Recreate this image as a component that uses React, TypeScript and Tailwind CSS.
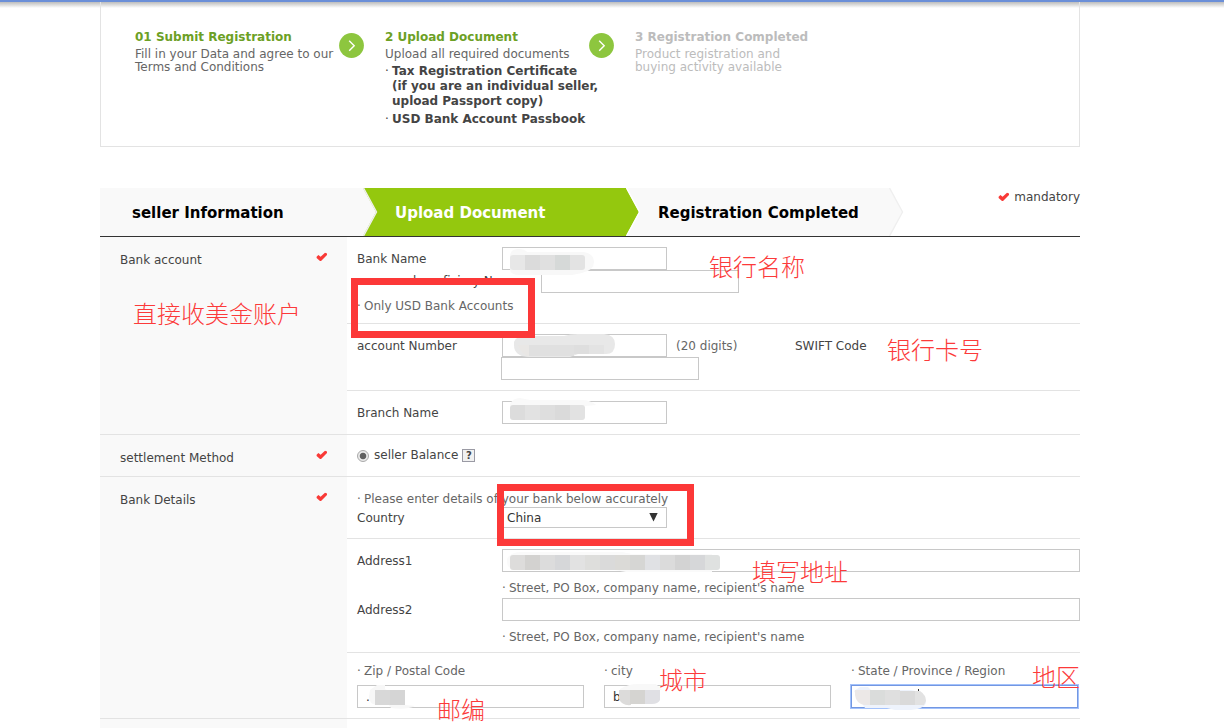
import { useState } from 'react';
import type { ReactNode } from 'react';

const INPUT = 'block h-[23px] w-full border bg-white px-2 text-xs text-[#333] outline-none';

function Check() {
  return (
    <svg width="12" height="10" viewBox="0 0 12 10" className="shrink-0" aria-hidden="true">
      <path d="M0.6 4.8 L2.4 2.9 L4.6 4.8 L9 0.8 L11 1.6 L11 3 L5 9 L4 9 L0.6 6 Z" fill="#f93a37" />
    </svg>
  );
}

function StepArrow() {
  return (
    <svg width="25" height="25" viewBox="0 0 25 25" className="mt-1 shrink-0" aria-hidden="true">
      <circle cx="12.5" cy="12.5" r="12.4" fill="#8dc63f" />
      <path d="M10.2 7.8 L15.2 12.8 L10.2 17.8" fill="none" stroke="#fff" strokeWidth="1.4" />
    </svg>
  );
}

interface StepProps {
  title: string;
  lines: string[];
  muted?: boolean;
  last?: boolean;
  children?: ReactNode;
}

function Step({ title, lines, muted, last, children }: StepProps) {
  return (
    <li className="w-[250px] whitespace-nowrap">
      <div className="flex">
        <div className="w-[204px]">
          <h3 className={`leading-4 font-bold ${muted ? 'text-[#bcbcbc]' : 'text-[#6ca025]'}`}>{title}</h3>
          <p className={`mt-[3px] leading-[13px] ${muted ? 'text-[#bcbcbc]' : 'text-[#666]'}`}>
            {lines[0]}
            {lines[1] && <br />}
            {lines[1]}
          </p>
        </div>
        {!last && <StepArrow />}
      </div>
      {children}
    </li>
  );
}

function Bullet({ children }: { children: ReactNode }) {
  return (
    <span className="flex text-[#666]">
      <span className="w-[7px] shrink-0">·</span>
      <span>{children}</span>
    </span>
  );
}

interface TabProps {
  label: string;
  active?: boolean;
}

function Tab({ label, active }: TabProps) {
  return (
    <li className={`relative w-[263px] ${active ? 'bg-[#94c80e]' : 'bg-[#f9f9f9]'}`}>
      <a
        href="#"
        className={`block pt-[13px] pb-[11px] pl-8 text-[15px] leading-6 font-bold whitespace-nowrap ${active ? 'text-white' : 'text-black'}`}
      >
        {label}
      </a>
      <svg width="15" height="48" viewBox="0 0 15 48" className="absolute top-0 left-full z-10" aria-hidden="true">
        <path d="M0 0 L13 24 L0 48 Z" fill={active ? '#94c80e' : '#f9f9f9'} />
        <path d="M0.5 0 L13.5 24 L0.5 48" fill="none" stroke={active ? '#ffffff' : '#efefef'} strokeWidth="1.4" />
      </svg>
    </li>
  );
}

interface FieldProps {
  id: string;
  label?: string;
  value?: string;
  className?: string;
  focused?: boolean;
  children?: ReactNode;
}

// children are drawn over the box, in the box's own coordinates
function Field({ id, label, value = '', className = '', focused, children }: FieldProps) {
  const [text, setText] = useState(value);
  return (
    <div className={`relative ${className}`}>
      <input
        id={id}
        type="text"
        aria-label={label}
        value={text}
        onChange={(e) => setText(e.target.value)}
        className={`${INPUT} ${focused ? 'border-[#7397e2] ring-1 ring-[#a3c2fb]' : 'border-[#c8c8c8]'}`}
      />
      {children && (
        <svg width="1" height="1" className="pointer-events-none absolute top-0 left-0 overflow-visible" aria-hidden="true">
          {children}
        </svg>
      )}
    </div>
  );
}

interface CellsProps {
  id: string;
  x: number;
  y: number;
  height: number;
  colors: string[];
  size?: number;
}

function Cells({ id, x, y, height, colors, size = 15 }: CellsProps) {
  return (
    <g>
      <clipPath id={id}>
        <rect x={x} y={y} width={size * colors.length} height={height} rx="3" />
      </clipPath>
      <g clipPath={`url(#${id})`}>
        {colors.map((color, i) => (
          <rect key={i} x={x + i * size} y={y} width={size} height={height} fill={color} />
        ))}
      </g>
    </g>
  );
}

function SideLabel({ children }: { children: ReactNode }) {
  return (
    <div className="flex w-[247px] shrink-0 items-start justify-between bg-[#f9f9f9] pt-[15px] pr-[19px] pl-5">
      <span className="leading-4">{children}</span>
      <Check />
    </div>
  );
}

function Label({ htmlFor, children }: { htmlFor: string; children: ReactNode }) {
  return (
    <label htmlFor={htmlFor} className="w-[145px] shrink-0 leading-6">
      {children}
    </label>
  );
}

function Note({ className, children }: { className: string; children: ReactNode }) {
  return (
    <span
      className={`pointer-events-none absolute font-['Noto_Sans_CJK_SC',sans-serif] text-2xl leading-8 font-light whitespace-nowrap text-[#fc3a3a] ${className}`}
    >
      {children}
    </span>
  );
}

export default function App() {
  const [country, setCountry] = useState('China');

  return (
    <div className="flex min-h-screen flex-col bg-white font-['DejaVu_Sans',Verdana,sans-serif] text-xs text-[#444]">
      <div className="h-0.5 bg-[#6b8fd8]" />
      <div className="h-1.5 bg-linear-to-b from-[#bdbdbd] to-white" />

      <div className="relative -mt-1.5 flex grow flex-col pr-36 pl-[100px]">
        <section className="border border-t-0 border-[#e3e3e3] pt-[27px] pb-[19px] pl-[34px]">
          <ol className="flex">
            <Step title="01 Submit Registration" lines={['Fill in your Data and agree to our', 'Terms and Conditions']} />
            <Step title="2 Upload Document" lines={['Upload all required documents']}>
              <ul className="mt-[3px] leading-[15px] font-bold">
                <li className="flex">
                  <span className="w-[7px] shrink-0 font-normal">·</span>
                  <span>
                    Tax Registration Certificate
                    <br />
                    (if you are an individual seller,
                    <br />
                    upload Passport copy)
                  </span>
                </li>
                <li className="mt-[3px] flex">
                  <span className="w-[7px] shrink-0 font-normal">·</span>
                  <span>USD Bank Account Passbook</span>
                </li>
              </ul>
            </Step>
            <Step
              title="3 Registration Completed"
              lines={['Product registration and', 'buying activity available']}
              muted
              last
            />
          </ol>
        </section>

        <nav className="mt-[41px] flex justify-between border-b border-[#333]">
          <ol className="flex">
            <Tab label="seller Information" />
            <Tab label="Upload Document" active />
            <Tab label="Registration Completed" />
          </ol>
          <p className="flex items-center gap-1 self-start leading-[18px]">
            <Check />
            mandatory
          </p>
        </nav>

        <form className="flex grow flex-col">
          <div className="flex border-b border-[#e3e3e3]">
            <SideLabel>Bank account</SideLabel>
            <div className="min-w-0 grow">
              <div className="border-b border-[#e3e3e3] pt-2.5 pb-1 pl-2.5">
                <div className="flex h-[23px]">
                  <Label htmlFor="bank-name">Bank Name</Label>
                  <Field id="bank-name" className="z-10 w-[165px]">
                    <path d="M8 8 Q9 2 16 2 Q23 2 25 5 H82 Q92 7 92 15 Q92 23 80 26 L70 28 H18 Q8 28 8 22 Z" fill="#f8f8f8" />
                    <Cells id="c-bank" x={8} y={8} height={15} colors={['#e7e7e7', '#dbdbdb', '#e0e0e0', '#d6d9d8', '#e3e3e3']} />
                  </Field>
                </div>
                <div className="flex h-[23px]">
                  <label htmlFor="beneficiary" className="w-[184px] shrink-0 pl-14 leading-[23px]">
                    beneficiary Name
                  </label>
                  <Field id="beneficiary" className="w-[198px]" />
                </div>
                <p className="leading-[26px]">
                  <Bullet>Only USD Bank Accounts</Bullet>
                </p>
              </div>

              <div className="border-b border-[#e3e3e3] py-2.5 pl-2.5">
                <div className="flex h-[23px] leading-6">
                  <Label htmlFor="account-number">account Number</Label>
                  <Field id="account-number" className="w-[165px]">
                    <path
                      d="M12 8 Q14 2 22 2 H62 Q68 0 76 0 H102 Q113 1 113 10 Q113 20 104 20 H76 L68 23 H26 Q12 22 12 11 Z"
                      fill="#e8e8e8"
                    />
                    <path d="M16 11 H27 V23 Q19 20 16 11 Z" fill="#e9e7e5" />
                    <rect x="27" y="11" width="45" height="11" fill="#e0e0e0" />
                    <rect x="72" y="11" width="15" height="9" fill="#dedede" />
                    <rect x="87" y="11" width="15" height="9" fill="#e3e3e3" />
                  </Field>
                  <span className="w-[128px] pl-[9px] text-[#666]">(20 digits)</span>
                  <label htmlFor="swift-code">SWIFT Code</label>
                </div>
                <Field id="swift-code" className="ml-36 w-[198px]" />
              </div>

              <div className="flex h-[43px] py-2.5 pl-2.5">
                <Label htmlFor="branch-name">Branch Name</Label>
                <Field id="branch-name" className="w-[165px]">
                  <path d="M8 3 Q11 -3 18 -3 L28 -1 H80 Q88 -1 94 4 L84 5 H8 Z" fill="#f9f9f9" />
                  <Cells id="c-branch" x={8} y={4} height={15} colors={['#dcdcdc', '#e2e2e2', '#dedede', '#dadada', '#e2e2e2']} />
                </Field>
              </div>
            </div>
          </div>

          <div className="flex border-b border-[#e3e3e3]">
            <SideLabel>settlement Method</SideLabel>
            <div className="flex items-center py-3 pl-2.5 leading-[17px]">
              <input
                id="seller-balance"
                type="radio"
                name="settlement"
                defaultChecked
                className="size-3 appearance-none rounded-full border border-[#a9a9a9] bg-radial from-[#606060] from-40% to-[#e9e9e9] to-52%"
              />
              <label htmlFor="seller-balance" className="ml-[5px]">
                seller Balance
              </label>
              <button
                type="button"
                aria-label="Help"
                className="ml-1 flex size-[13px] items-center justify-center border border-[#9a9aa4] bg-[#f1f1f1] text-[10px] leading-none font-bold"
              >
                ?
              </button>
            </div>
          </div>

          <div className="flex border-b border-[#e3e3e3]">
            <SideLabel>Bank Details</SideLabel>
            <div className="min-w-0 grow">
              <div className="border-b border-[#e3e3e3] pt-[15px] pb-2.5 pl-2.5">
                <p className="leading-[15px]">
                  <Bullet>Please enter details of your bank below accurately</Bullet>
                </p>
                <div className="flex h-[21px]">
                  <label htmlFor="country" className="w-[145px] shrink-0 leading-[22px]">
                    Country
                  </label>
                  <div className="relative w-[165px]">
                    <select
                      id="country"
                      value={country}
                      onChange={(e) => setCountry(e.target.value)}
                      className="block h-[21px] w-full appearance-none border border-[#c8c8c8] bg-white pl-1 text-[#333]"
                    >
                      <option>China</option>
                      <option>Korea</option>
                    </select>
                    <svg width="9" height="9" viewBox="0 0 9 9" className="pointer-events-none absolute top-1.5 right-[9px]" aria-hidden="true">
                      <path d="M0.3 0 H8.7 L4.5 8.6 Z" fill="#333" />
                    </svg>
                  </div>
                </div>
              </div>

              <div className="border-b border-[#e3e3e3] pt-2.5 pb-[5px] pl-2.5">
                <div className="flex">
                  <Label htmlFor="address1">Address1</Label>
                  <div className="grow">
                    <Field id="address1">
                      <path d="M5 10 Q8 3 20 3 H120 L130 5 H210 V23 H124 L112 21 H12 Q4 19 5 10 Z" fill="#fafafa" />
                      <Cells
                        id="c-address"
                        x={8}
                        y={6}
                        height={15}
                        colors={[
                          '#dddcdb', '#d3d2d0', '#dcdcdc', '#d6d7d9', '#e2e2e2', '#dededc', '#dadada',
                          '#dbdad7', '#d6d6d4', '#e0e1e4', '#dbdbdb', '#d3d3d3', '#d6d7d9', '#dfe1e0',
                        ]}
                      />
                    </Field>
                    <p className="pt-1.5 leading-5">
                      <Bullet>Street, PO Box, company name, recipient's name</Bullet>
                    </p>
                  </div>
                </div>
                <div className="flex">
                  <Label htmlFor="address2">Address2</Label>
                  <div className="grow">
                    <Field id="address2" />
                    <p className="pt-1.5 leading-5">
                      <Bullet>Street, PO Box, company name, recipient's name</Bullet>
                    </p>
                  </div>
                </div>
              </div>

              <div className="grid grid-cols-3 gap-5 py-2.5 pr-0.5 pl-2.5">
                <div>
                  <label htmlFor="zip" className="mb-1.5 block leading-4">
                    <Bullet>Zip / Postal Code</Bullet>
                  </label>
                  <Field id="zip" value=".">
                    <path d="M13 5 L20 0 H28 V4 L48 20 L58 21 Q50 25 34 23 L32 20 H20 Q12 19 12 12 Z" fill="#f7f7f7" />
                    <rect x="18" y="5" width="15" height="15" fill="#d8d8d8" />
                    <rect x="33" y="5" width="15" height="15" fill="#d5d5d5" />
                  </Field>
                </div>
                <div>
                  <label htmlFor="city" className="mb-1.5 block leading-4">
                    <Bullet>city</Bullet>
                  </label>
                  <Field id="city" value="b">
                    <path d="M16 4 Q24 -1 34 -1 H52 L58 5 H16 Z" fill="#f8f8f8" />
                    <path d="M15 5 H27 V20 Q18 21 15 14 Z" fill="#dcdbda" />
                    <rect x="26" y="5" width="15" height="14" fill="#d5d4d1" />
                    <path d="M41 5 H56 V15 Q54 19 48 19 H41 Z" fill="#e0e0e4" />
                  </Field>
                </div>
                <div>
                  <label htmlFor="state" className="mb-1.5 block leading-4">
                    <Bullet>State / Province / Region</Bullet>
                  </label>
                  <Field id="state" focused>
                    <path d="M3 6 L9 2 H17 L20 5 H60 Q75 8 75 18 Q72 25 56 25 H44 L36 23 H14 Z" fill="#eef3fc" />
                    <path d="M4 5 H19 V20 H13 Q5 18 4 10 Z" fill="#ece8e7" />
                    <rect x="19" y="5" width="15" height="15" fill="#dadcdb" />
                    <rect x="34" y="5" width="15" height="15" fill="#dfdfdf" />
                    <rect x="49" y="6" width="15" height="14" fill="#dadada" />
                    <path d="M64 6 H69 Q75 10 75 16 L73 20 H64 Z" fill="#e2e2e2" />
                    <rect x="67" y="4" width="1" height="2" fill="#333" />
                  </Field>
                </div>
              </div>
            </div>
          </div>

          <div className="flex grow">
            <div className="w-[247px] bg-[#f9f9f9]" />
          </div>
        </form>

        <div className="pointer-events-none absolute top-[276px] left-[351px] z-20 h-[60px] w-[184px] border-7 border-[#fc3838]" />
        <div className="pointer-events-none absolute top-[482px] left-[497px] z-20 h-[62px] w-[197px] border-7 border-[#fc3838]" />
        <Note className="top-[295px] left-[133px]">直接收美金账户</Note>
        <Note className="top-[248px] left-[709px]">银行名称</Note>
        <Note className="top-[331px] left-[887px]">银行卡号</Note>
        <Note className="top-[553px] left-[752px]">填写地址</Note>
        <Note className="top-[661px] left-[659px]">城市</Note>
        <Note className="top-[691px] left-[437px]">邮编</Note>
        <Note className="top-[658px] right-[144px]">地区</Note>
      </div>
    </div>
  );
}
